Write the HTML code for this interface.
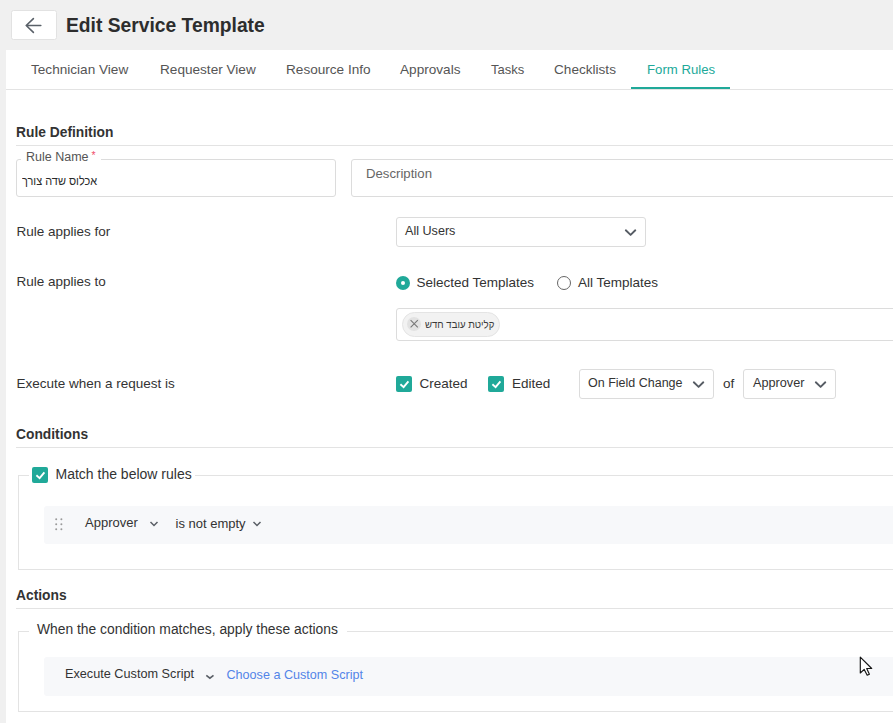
<!DOCTYPE html>
<html><head><meta charset="utf-8">
<style>
html,body{margin:0;padding:0;}
body{width:893px;height:723px;overflow:hidden;background:#f0f0f0;position:relative;font-family:"Liberation Sans",sans-serif;color:#333;}
.a{position:absolute;white-space:nowrap;line-height:1;}
.card{position:absolute;left:6px;top:50px;width:887px;height:673px;background:#fff;}
.hl{position:absolute;height:1px;background:#e3e3e3;}
.vl{position:absolute;width:1px;background:#e3e3e3;}
.box{position:absolute;border:1px solid #dcdcdc;border-radius:3px;background:#fff;box-sizing:border-box;}
.t14{font-size:13.5px;}
.tab{font-size:13.6px;color:#555;}
.h{font-size:15px;font-weight:bold;color:#333;transform:scaleX(0.92);transform-origin:0 0}
.chev{position:absolute;}
.cb{position:absolute;width:16px;height:16px;border-radius:2px;background:#20a999;}
.row{position:absolute;background:#f7f8fa;border-radius:3px;}
</style></head><body>
<!-- header -->
<div class="box" style="left:11px;top:10px;width:46px;height:30px;border-color:#e2e2e2;border-radius:2.5px"></div>
<svg class="a" style="left:24px;top:17px" width="18" height="17" viewBox="0 0 18 17"><path d="M9.4 1.6 L2.2 8.5 L9.4 15.4 M2.2 8.5 H16.8" fill="none" stroke="#596068" stroke-width="1.6" stroke-linecap="round" stroke-linejoin="round"/></svg>
<div class="a" style="left:66px;top:14.7px;font-size:20.8px;font-weight:bold;color:#2d2d2d;transform:scaleX(0.926);transform-origin:0 0">Edit Service Template</div>

<div class="card"></div>
<!-- tabs -->
<div class="a tab" style="left:31px;top:62.5px">Technician View</div>
<div class="a tab" style="left:160px;top:62.5px">Requester View</div>
<div class="a tab" style="left:286px;top:62.5px">Resource Info</div>
<div class="a tab" style="left:400px;top:62.5px">Approvals</div>
<div class="a tab" style="left:491px;top:62.5px;font-size:13px">Tasks</div>
<div class="a tab" style="left:554px;top:62.5px">Checklists</div>
<div class="a tab" style="left:647px;top:62.8px;color:#20a999;font-size:13.2px">Form Rules</div>
<div class="hl" style="left:6px;top:89px;width:887px;"></div>
<div class="a" style="left:631px;top:87px;width:99px;height:2px;background:#20a999"></div>

<!-- Rule definition -->
<div class="a h" style="left:16.3px;top:124.2px">Rule Definition</div>
<div class="hl" style="left:16px;top:145px;width:877px;"></div>

<div class="box" style="left:16px;top:159px;width:320px;height:38px;"></div>
<div class="a" style="left:21px;top:153px;width:80px;height:12px;background:#fff"></div>
<div class="a" style="left:26px;top:150.8px;font-size:12.5px;color:#555">Rule Name<span style="color:#f0506e;margin-left:3px;font-size:10.5px;position:relative;top:-1.5px">*</span></div>
<div class="a" style="left:22px;top:175.3px;font-size:12.3px;color:#2a2a2a;transform:scaleX(0.89);transform-origin:0 0">אכלוס שדה צורך</div>

<div class="box" style="left:351px;top:159px;width:560px;height:38px;"></div>
<div class="a" style="left:366px;top:167.3px;font-size:13.2px;color:#666">Description</div>

<div class="a t14" style="left:16.5px;top:225px">Rule applies for</div>
<div class="box" style="left:396px;top:217px;width:250px;height:30px;"></div>
<div class="a" style="left:405px;top:224.5px;font-size:12.6px;color:#333">All Users</div>
<svg class="a" style="left:624px;top:228px" width="13" height="9" viewBox="0 0 13 9"><path d="M1.8 2.3 L6.6 6.9 L11.3 2.3" fill="none" stroke="#565c64" stroke-width="1.9" stroke-linecap="round" stroke-linejoin="round"/></svg>

<div class="a t14" style="left:16.5px;top:275px">Rule applies to</div>
<div class="a" style="left:396px;top:276px;width:14px;height:14px;border-radius:50%;background:#20a999"></div>
<div class="a" style="left:400.8px;top:280.8px;width:4.4px;height:4.4px;border-radius:50%;background:#fff"></div>
<div class="a t14" style="left:416.5px;top:276px">Selected Templates</div>
<div class="a" style="left:557px;top:276px;width:14px;height:14px;border-radius:50%;border:1px solid #666;box-sizing:border-box"></div>
<div class="a t14" style="left:578px;top:276px">All Templates</div>

<div class="box" style="left:396px;top:308px;width:520px;height:33px;"></div>
<div class="a" style="left:402px;top:312px;width:98px;height:25px;border-radius:13px;background:#f2f2f2;border:1px solid #e4e4e4;box-sizing:border-box"></div>
<div class="a" style="left:407px;top:317px;width:14px;height:14px;border-radius:50%;background:#e2e2e2"></div>
<svg class="a" style="left:407px;top:317px" width="14" height="14" viewBox="0 0 14 14"><path d="M3.6 3.1 L10.8 10.3 M10.8 3.1 L3.6 10.3" stroke="#777" stroke-width="1.1"/></svg>
<div class="a" style="left:425px;top:318.5px;font-size:10.8px;color:#3a3a3a;transform:scaleX(0.89);transform-origin:0 0">קליטת עובד חדש</div>

<div class="a t14" style="left:16.5px;top:377px">Execute when a request is</div>
<div class="cb" style="left:396px;top:376px"></div>
<svg class="a" style="left:396px;top:376px" width="16" height="16" viewBox="0 0 16 16"><path d="M4.4 8.3 L7.6 11.1 L12.4 5.4" fill="none" stroke="#fff" stroke-width="1.9"/></svg>
<div class="a t14" style="left:419.5px;top:376.5px">Created</div>
<div class="cb" style="left:488px;top:376px"></div>
<svg class="a" style="left:488px;top:376px" width="16" height="16" viewBox="0 0 16 16"><path d="M4.4 8.3 L7.6 11.1 L12.4 5.4" fill="none" stroke="#fff" stroke-width="1.9"/></svg>
<div class="a t14" style="left:512px;top:376.5px">Edited</div>

<div class="box" style="left:579px;top:369px;width:135px;height:30px;"></div>
<div class="a" style="left:588px;top:376.5px;font-size:12.5px">On Field Change</div>
<svg class="a" style="left:692px;top:380px" width="13" height="9" viewBox="0 0 13 9"><path d="M1.8 2.3 L6.6 6.9 L11.3 2.3" fill="none" stroke="#565c64" stroke-width="1.9" stroke-linecap="round" stroke-linejoin="round"/></svg>
<div class="a t14" style="left:723px;top:377px">of</div>
<div class="box" style="left:743px;top:369px;width:93px;height:30px;"></div>
<div class="a" style="left:753px;top:376.5px;font-size:12.7px">Approver</div>
<svg class="a" style="left:814px;top:380px" width="13" height="9" viewBox="0 0 13 9"><path d="M1.8 2.3 L6.6 6.9 L11.3 2.3" fill="none" stroke="#565c64" stroke-width="1.9" stroke-linecap="round" stroke-linejoin="round"/></svg>

<!-- Conditions -->
<div class="a h" style="left:16.3px;top:426.3px">Conditions</div>
<div class="hl" style="left:16px;top:447px;width:877px;"></div>
<div class="a" style="left:18px;top:475px;width:880px;height:95px;border:1px solid #e3e3e3;box-sizing:border-box"></div>
<div class="a" style="left:29px;top:465px;width:166px;height:20px;background:#fff"></div>
<div class="cb" style="left:32px;top:467px"></div>
<svg class="a" style="left:32px;top:467px" width="16" height="16" viewBox="0 0 16 16"><path d="M4.4 8.3 L7.6 11.1 L12.4 5.4" fill="none" stroke="#fff" stroke-width="1.9"/></svg>
<div class="a" style="left:55.5px;top:467px;font-size:14px">Match the below rules</div>

<div class="row" style="left:44px;top:506px;width:860px;height:38px;"></div>
<svg class="a" style="left:54px;top:517px" width="10" height="15" viewBox="0 0 10 15"><g fill="#9a9a9a"><circle cx="2.2" cy="2.2" r="1"/><circle cx="7.4" cy="2.2" r="1"/><circle cx="2.2" cy="7.2" r="1"/><circle cx="7.4" cy="7.2" r="1"/><circle cx="2.2" cy="12.2" r="1"/><circle cx="7.4" cy="12.2" r="1"/></g></svg>
<div class="a" style="left:85px;top:516px;font-size:13px">Approver</div>
<svg class="a" style="left:149px;top:519.8px" width="10" height="8" viewBox="0 0 10 8"><path d="M1.5 2 L5 5.5 L8.5 2" fill="none" stroke="#5a5f66" stroke-width="1.5"/></svg>
<div class="a" style="left:175.5px;top:516.5px;font-size:13px">is not empty</div>
<svg class="a" style="left:252px;top:519.8px" width="10" height="8" viewBox="0 0 10 8"><path d="M1.5 2 L5 5.5 L8.5 2" fill="none" stroke="#5a5f66" stroke-width="1.5"/></svg>

<!-- Actions -->
<div class="a h" style="left:16.3px;top:586.9px">Actions</div>
<div class="hl" style="left:16px;top:608px;width:877px;"></div>
<div class="a" style="left:18px;top:631px;width:880px;height:81px;border:1px solid #e3e3e3;box-sizing:border-box"></div>
<div class="a" style="left:29px;top:620px;width:318px;height:20px;background:#fff"></div>
<div class="a" style="left:37px;top:622.5px;font-size:13.85px">When the condition matches, apply these actions</div>

<div class="row" style="left:44px;top:657px;width:860px;height:39px;"></div>
<div class="a" style="left:65px;top:668.3px;font-size:12.7px">Execute Custom Script</div>
<svg class="a" style="left:204px;top:671px" width="11" height="9" viewBox="0 0 11 9"><path d="M2.3 4.3 L5.9 7.2 L9.5 4.3" fill="none" stroke="#5a5f66" stroke-width="1.6"/></svg>
<div class="a" style="left:226.5px;top:668.7px;font-size:12.6px;color:#5384e8">Choose a Custom Script</div>

<!-- cursor -->
<svg class="a" style="left:858.3px;top:654.6px" width="18" height="23" viewBox="0 0 18 23"><path d="M2.3 2.2 L2.3 18 L6.2 14.4 L9.2 20.2 L11.4 19.2 L8.7 13.5 L13.7 13.5 Z" fill="#fff" stroke="#151515" stroke-width="1.15" stroke-linejoin="round"/></svg>
</body></html>
